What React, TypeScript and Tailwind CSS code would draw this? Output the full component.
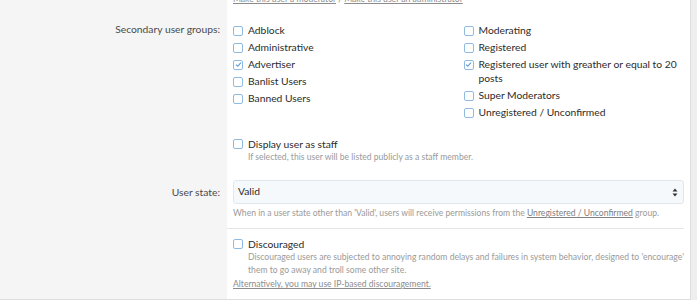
import React from "react";

const font = { fontFamily: 'Lato, "Noto Sans", sans-serif' };

function Box({ checked = false }: { checked?: boolean }) {
  return (
    <span className="mt-[3px] mr-[5px] flex h-[10px] w-[10px] shrink-0 items-center justify-center rounded-[2px] border-[1.5px] border-[#8fbbe3] bg-white">
      {checked && (
        <svg width="7" height="7" viewBox="0 0 8 8">
          <path d="M1.2 4.2 L3.2 6 L6.8 1.8" fill="none" stroke="#5d9ad0" strokeWidth="1.3" />
        </svg>
      )}
    </span>
  );
}

function Item({ label, checked }: { label: string; checked?: boolean }) {
  return (
    <div className="flex items-start py-[1.5px] leading-[14px] text-[#2b2b2b]">
      <Box checked={checked} />
      <span>{label}</span>
    </div>
  );
}

function Row({ label, children, labelClass = "" }: { label?: string; children: React.ReactNode; labelClass?: string }) {
  return (
    <div className="flex">
      <div className={"w-[227px] shrink-0 bg-[#f5f5f5] pr-[7px] text-right text-[#4a4a4a] " + labelClass}>{label}</div>
      <div className="min-w-0 flex-1 bg-white">{children}</div>
    </div>
  );
}

export default function App() {
  return (
    <div className="h-[300px] w-[697px] overflow-hidden bg-[#eeeeee] text-[10.3px]" style={font}>
      <div className="-mt-[8px] w-[691px] border-r border-b border-[#dedede]">
        <Row>
          <div className="pl-[6px] text-[8.6px] leading-[14px] text-[#8c8c8c]">
            <span className="underline">Make this user a moderator</span> / <span className="underline">Make this user an administrator</span>
          </div>
        </Row>
        <Row label="Secondary user groups:" labelClass="pt-[15px] leading-[17px]">
          <div className="grid grid-cols-2 pl-[6px] pr-[6px] pt-[15px]">
            <div>
              <Item label="Adblock" />
              <Item label="Administrative" />
              <Item label="Advertiser" checked />
              <Item label="Banlist Users" />
              <Item label="Banned Users" />
            </div>
            <div className="pl-[5px]">
              <Item label="Moderating" />
              <Item label="Registered" />
              <Item label="Registered user with greather or equal to 20 posts" checked />
              <Item label="Super Moderators" />
              <Item label="Unregistered / Unconfirmed" />
            </div>
          </div>
        </Row>
        <Row>
          <div className="pl-[6px] pt-[16px]">
            <div className="flex items-start leading-[16px] text-[#2b2b2b]">
              <Box />
              <span>Display user as staff</span>
            </div>
            <div className="-mt-[1px] pl-[15px] text-[8.6px] leading-[13px] text-[#9a9a9a]">
              If selected, this user will be listed publicly as a staff member.
            </div>
          </div>
        </Row>
        <Row label="User state:" labelClass="pt-[16px] leading-[24px]">
          <div className="pl-[6px] pr-[6px] pt-[16px]">
            <div className="flex h-[24px] items-center justify-between rounded-[3px] border border-[#e2e7ed] bg-[#f6f9fc] pl-[4px] pr-[5px] text-[#2b2b2b]">
              <span>Valid</span>
              <svg width="6" height="9" viewBox="0 0 6 9">
                <path d="M3 0.5 L5.5 3.5 H0.5 Z M3 8.5 L5.5 5.5 H0.5 Z" fill="#333" />
              </svg>
            </div>
            <div className="mt-[3px] pb-[8px] text-[8.6px] leading-[13px] text-[#9a9a9a]">
              When in a user state other than 'Valid', users will receive permissions from the{" "}
              <span className="text-[#808080] underline">Unregistered / Unconfirmed</span> group.
            </div>
          </div>
        </Row>
        <Row>
          <div className="mr-[6px] border-t border-[#e6e6e6]" />
          <div className="pl-[6px] pt-[7px] pb-[8px]">
            <div className="flex items-start leading-[16px] text-[#2b2b2b]">
              <Box />
              <span>Discouraged</span>
            </div>
            <div className="-mt-[1px] pl-[15px] pr-[2px] text-[8.6px] leading-[12.5px] text-[#9a9a9a]">
              Discouraged users are subjected to annoying random delays and failures in system behavior, designed to 'encourage' them to go away and troll some other site.
            </div>
            <div className="mt-[2px] text-[8.6px] leading-[13px] text-[#8c8c8c] underline">
              Alternatively, you may use IP-based discouragement.
            </div>
          </div>
        </Row>
      </div>
    </div>
  );
}
